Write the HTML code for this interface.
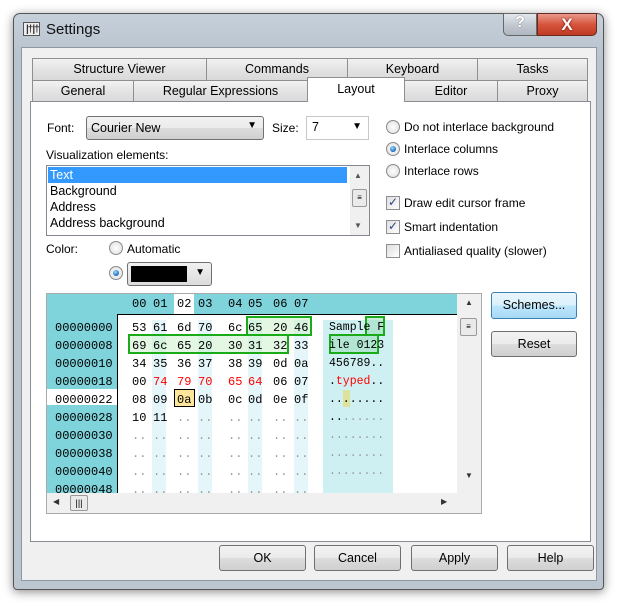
<!DOCTYPE html>
<html><head><style>
*{margin:0;padding:0;box-sizing:border-box}
body{width:621px;height:608px;background:#fff;position:relative;overflow:hidden;font-family:"Liberation Sans",sans-serif;font-size:12px;color:#000}
.a{position:absolute}
.win{left:13px;top:13px;width:591px;height:577px;border:1px solid #555;border-radius:7px 7px 4px 4px;background:linear-gradient(to bottom,#c5d0db,#b9c4cf 40px,#bcc6d0);box-shadow:0 2px 10px rgba(0,0,0,.45)}
.client{left:21px;top:47px;width:576px;height:534px;background:#f0f0f0;border:1px solid #8c98a4}
.tab{position:absolute;height:22px;border:1px solid #8e8f8f;border-bottom:none;background:linear-gradient(#f2f2f2,#e3e3e3 50%,#d9d9d9);text-align:center;line-height:21px;font-size:12.5px}
.panel{left:30px;top:101px;width:561px;height:441px;background:#fff;border:1px solid #898c95}
.btn{position:absolute;border:1px solid #707070;border-radius:3px;background:linear-gradient(#f2f2f2,#ebebeb 50%,#dddddd 51%,#cfcfcf);text-align:center;font-size:12.5px}
.radio{position:absolute;width:14px;height:14px;border-radius:50%;border:1px solid #8b8b8b;background:radial-gradient(#fff,#dcdcdc)}
.radio.on::after{content:"";position:absolute;left:3px;top:3px;width:6px;height:6px;border-radius:50%;background:radial-gradient(circle at 40% 35%,#9fe0ff,#1668b8 70%,#0c3f78)}
.chk{position:absolute;width:14px;height:14px;border:1px solid #8e8f8f;background:linear-gradient(135deg,#dedede,#fff)}
.hex{font-family:"Liberation Mono",monospace;font-size:12px;position:absolute;white-space:pre}
.grid{font-family:"Liberation Mono",monospace;font-size:12px;position:absolute}
.r{height:18px;line-height:18px;white-space:nowrap}
.r span{display:inline-block}
.r span:nth-child(1){width:21px}.r span:nth-child(2){width:24px}.r span:nth-child(3){width:21px}.r span:nth-child(4){width:30px}
.r span:nth-child(5){width:20px}.r span:nth-child(6){width:25px}.r span:nth-child(7){width:21px}.r span:nth-child(8){width:20px}
.g{color:#999}.red{color:red}
.sb{background:#f0f0f0}
</style></head><body>
<div class="a win"></div>
<div class="a" style="left:23px;top:22px;width:17px;height:14px;border:1px solid #555;background:#eee"></div>
<div class="a" style="left:26px;top:24px;font-size:10px;letter-spacing:-1px;font-weight:bold;color:#333">|†|†</div>
<div class="a" style="left:46px;top:21px;font-size:15px;color:#111">Settings</div>
<div class="a" style="left:503px;top:13px;width:34px;height:23px;border:1px solid #666;border-radius:0 0 0 5px;background:linear-gradient(#e4e8ec,#c4cad2 50%,#aeb6c0);text-align:center;font-weight:bold;font-size:16px;color:#fff;text-shadow:0 0 1px #333">?</div>
<div class="a" style="left:537px;top:13px;width:60px;height:23px;border:1px solid #6a2a22;border-radius:0 0 5px 0;background:linear-gradient(#e99a8c,#d6543d 50%,#c03a22);text-align:center;font-weight:bold;font-size:17px;color:#fff;line-height:22px;text-shadow:0 0 2px #600">X</div>
<div class="a client"></div>
<div class="tab" style="left:32px;top:58px;width:175px">Structure Viewer</div>
<div class="tab" style="left:206px;top:58px;width:142px">Commands</div>
<div class="tab" style="left:347px;top:58px;width:131px">Keyboard</div>
<div class="tab" style="left:477px;top:58px;width:111px">Tasks</div>
<div class="tab" style="left:32px;top:80px;width:102px">General</div>
<div class="tab" style="left:133px;top:80px;width:175px">Regular Expressions</div>
<div class="tab" style="left:404px;top:80px;width:94px">Editor</div>
<div class="tab" style="left:497px;top:80px;width:91px">Proxy</div>
<div class="a panel"></div>
<div class="tab" style="left:307px;top:77px;width:98px;height:25px;background:#fff;line-height:23px;z-index:2">Layout</div>
<div class="a" style="left:47px;top:121px">Font:</div>
<div class="a" style="left:86px;top:116px;width:178px;height:24px;border:1px solid #707070;border-radius:3px;background:linear-gradient(#f2f2f2,#ebebeb 50%,#ddd 51%,#cfcfcf);padding:4px 4px;font-size:12.5px">Courier New<span style="position:absolute;right:6px;top:3px;font-size:10px">▼</span></div>
<div class="a" style="left:272px;top:121px">Size:</div>
<div class="a" style="left:306px;top:116px;width:63px;height:24px;border:1px solid #c8c8c8;background:#fff;padding:3px 5px;font-size:12.5px">7<span style="position:absolute;right:6px;top:4px;font-size:10px">▼</span></div>
<div class="a" style="left:46px;top:148px">Visualization elements:</div>
<div class="a" style="left:46px;top:165px;width:324px;height:71px;border:1px solid #828790;background:#fff;overflow:hidden">
<div style="position:absolute;left:1px;top:1px;width:299px;height:16px;background:#3399ff"></div>
<div style="position:absolute;left:3px;top:1px;line-height:16px;font-size:12.5px"><span style="color:#fff">Text</span><br>Background<br>Address<br>Address background</div>
<div class="sb" style="position:absolute;right:0;top:0;width:19px;height:69px"><div style="position:absolute;left:4px;top:5px;font-size:8px;color:#555">▲</div><div style="position:absolute;left:2px;top:23px;width:15px;height:18px;border:1px solid #999;border-radius:2px;background:#eaeaea;font-size:8px;text-align:center;line-height:16px">≡</div><div style="position:absolute;left:4px;top:55px;font-size:8px;color:#555">▼</div></div>
</div>
<div class="a" style="left:46px;top:242px">Color:</div>
<div class="radio" style="left:109px;top:241px"></div>
<div class="a" style="left:127px;top:242px">Automatic</div>
<div class="radio on" style="left:109px;top:266px"></div>
<div class="a" style="left:127px;top:262px;width:85px;height:24px;border:1px solid #707070;border-radius:3px;background:linear-gradient(#f2f2f2,#dcdcdc)"><div style="position:absolute;left:3px;top:3px;width:56px;height:16px;background:#000"></div><span style="position:absolute;right:6px;top:4px;font-size:10px">▼</span></div>
<div class="radio" style="left:386px;top:120px"></div><div class="a" style="left:404px;top:120px">Do not interlace background</div>
<div class="radio on" style="left:386px;top:142px"></div><div class="a" style="left:404px;top:142px">Interlace columns</div>
<div class="radio" style="left:386px;top:164px"></div><div class="a" style="left:404px;top:164px">Interlace rows</div>
<div class="chk" style="left:386px;top:196px"><span style="position:absolute;left:1px;top:-2px;color:#2b3f8a;font-size:12px">✓</span></div><div class="a" style="left:404px;top:196px">Draw edit cursor frame</div>
<div class="chk" style="left:386px;top:220px"><span style="position:absolute;left:1px;top:-2px;color:#2b3f8a;font-size:12px">✓</span></div><div class="a" style="left:404px;top:220px">Smart indentation</div>
<div class="chk" style="left:386px;top:244px"></div><div class="a" style="left:404px;top:244px">Antialiased quality (slower)</div>
<!-- hex view -->
<div class="a" style="left:46px;top:293px;width:436px;height:221px;border:1px solid #aaa;background:#fff;overflow:hidden">
<div class="a" style="left:0;top:0;width:410px;height:20px;background:#7fd3db"></div>
<div class="a" style="left:0;top:0;width:70px;height:200px;background:#7fd3db"></div>
<div class="a" style="left:70px;top:20px;width:340px;height:180px;background:#fff;border-left:1px solid #000;border-top:1px solid #000"></div>
<div class="a" style="left:127px;top:0;width:20px;height:20px;background:#fff"></div>
<div class="a" style="left:0;top:95px;width:70px;height:16px;background:#fff"></div>
<div class="a" style="left:105px;top:26px;width:14px;height:174px;background:#e4f6f9"></div>
<div class="a" style="left:151px;top:26px;width:14px;height:174px;background:#e4f6f9"></div>
<div class="a" style="left:201px;top:26px;width:14px;height:174px;background:#e4f6f9"></div>
<div class="a" style="left:247px;top:26px;width:14px;height:174px;background:#e4f6f9"></div>
<div class="a" style="left:276px;top:26px;width:70px;height:174px;background:#cff0f3"></div>
<div class="a" style="left:199px;top:22px;width:66px;height:20px;border:2px solid #1aaa1a;background:rgba(200,240,200,.5)"></div>
<div class="a" style="left:81px;top:40px;width:161px;height:20px;border:2px solid #1aaa1a;background:rgba(200,240,200,.5)"></div>
<div class="a" style="left:318px;top:22px;width:20px;height:20px;border:2px solid #1aaa1a;background:rgba(150,220,180,.5)"></div>
<div class="a" style="left:282px;top:40px;width:50px;height:20px;border:2px solid #1aaa1a;background:rgba(150,220,180,.5)"></div>
<div class="a" style="left:127px;top:95px;width:21px;height:18px;border:1px solid #000;background:#fde59a"></div>
<div class="a" style="left:296px;top:96px;width:7px;height:17px;background:#dde39a"></div>
<div class="grid" style="left:85px;top:1px"><div class="r"><span>00</span><span>01</span><span>02</span><span>03</span><span>04</span><span>05</span><span>06</span><span>07</span></div></div>
<div class="hex" style="left:8px;top:25px;line-height:18px">00000000
00000008
00000010
00000018
00000022
00000028
00000030
00000038
00000040
00000048</div>
<div class="grid" style="left:85px;top:25px"><div class="r"><span>53</span><span>61</span><span>6d</span><span>70</span><span>6c</span><span>65</span><span>20</span><span>46</span></div><div class="r"><span>69</span><span>6c</span><span>65</span><span>20</span><span>30</span><span>31</span><span>32</span><span>33</span></div><div class="r"><span>34</span><span>35</span><span>36</span><span>37</span><span>38</span><span>39</span><span>0d</span><span>0a</span></div><div class="r"><span>00</span><span class="red">74</span><span class="red">79</span><span class="red">70</span><span class="red">65</span><span class="red">64</span><span>06</span><span>07</span></div><div class="r"><span>08</span><span>09</span><span>0a</span><span>0b</span><span>0c</span><span>0d</span><span>0e</span><span>0f</span></div><div class="r"><span>10</span><span>11</span><span class="g">..</span><span class="g">..</span><span class="g">..</span><span class="g">..</span><span class="g">..</span><span class="g">..</span></div><div class="r g"><span>..</span><span>..</span><span>..</span><span>..</span><span>..</span><span>..</span><span>..</span><span>..</span></div><div class="r g"><span>..</span><span>..</span><span>..</span><span>..</span><span>..</span><span>..</span><span>..</span><span>..</span></div><div class="r g"><span>..</span><span>..</span><span>..</span><span>..</span><span>..</span><span>..</span><span>..</span><span>..</span></div><div class="r g"><span>..</span><span>..</span><span>..</span><span>..</span><span>..</span><span>..</span><span>..</span><span>..</span></div></div>
<div class="hex" style="left:282px;top:25px;line-height:18px;font-size:11.5px">Sample F
ile 0123
456789..
.<span style="color:red">typed</span>..
........
..<span class="g">......</span>
<span class="g">........
........
........</span></div>
<div class="sb a" style="left:410px;top:0;width:24px;height:199px"><div style="position:absolute;left:8px;top:4px;font-size:8px;color:#333">▲</div><div style="position:absolute;left:3px;top:24px;width:17px;height:18px;border:1px solid #999;border-radius:2px;background:#eaeaea;font-size:8px;text-align:center;line-height:16px">≡</div><div style="position:absolute;left:8px;top:177px;font-size:8px;color:#333">▼</div></div>
<div class="sb a" style="left:0;top:199px;width:434px;height:20px"><div style="position:absolute;left:6px;top:4px;font-size:8px;color:#333">◀</div><div style="position:absolute;left:23px;top:2px;width:18px;height:16px;border:1px solid #999;border-radius:2px;background:#eaeaea;font-size:9px;text-align:center;line-height:14px">|||</div><div style="position:absolute;left:394px;top:4px;font-size:8px;color:#333">▶</div></div>
</div>
<div class="btn" style="left:491px;top:292px;width:86px;height:27px;line-height:25px;border-color:#3c7fb1;background:linear-gradient(#eaf6fd,#d9f0fc 50%,#bee6fd 51%,#a7d9f5)">Schemes...</div>
<div class="btn" style="left:491px;top:331px;width:86px;height:26px;line-height:24px">Reset</div>
<div class="btn" style="left:219px;top:545px;width:87px;height:26px;line-height:24px">OK</div>
<div class="btn" style="left:314px;top:545px;width:87px;height:26px;line-height:24px">Cancel</div>
<div class="btn" style="left:411px;top:545px;width:87px;height:26px;line-height:24px">Apply</div>
<div class="btn" style="left:507px;top:545px;width:87px;height:26px;line-height:24px">Help</div>
</body></html>
